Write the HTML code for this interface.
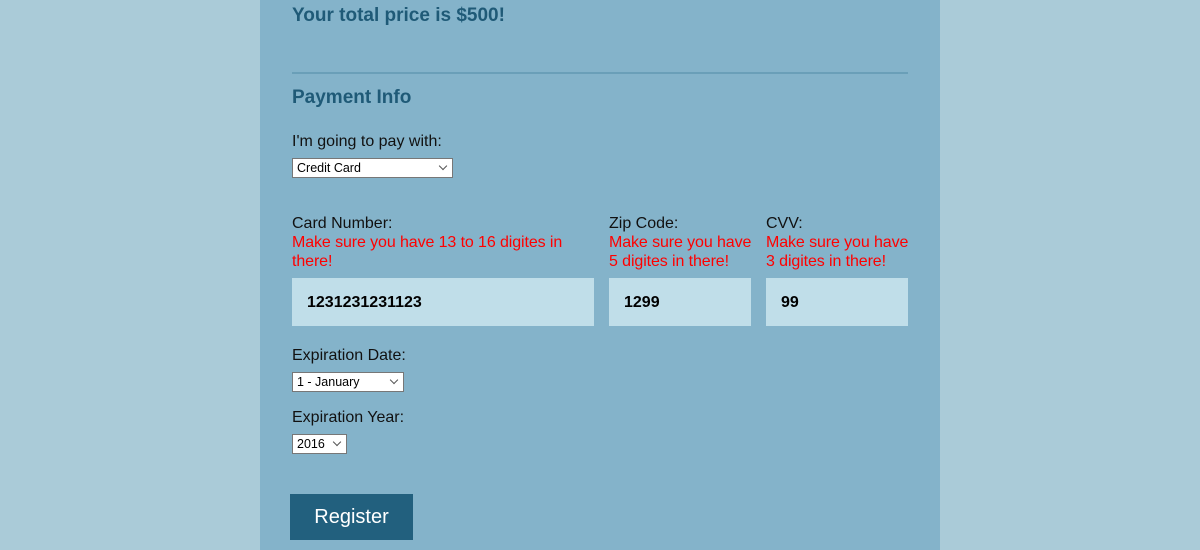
<!DOCTYPE html>
<html><head><style>
body{margin:0;width:1200px;height:550px;background:#aacbd8;font-family:"Liberation Sans",sans-serif;overflow:hidden;position:relative}
.p{position:absolute;left:260px;top:0;width:680px;height:550px;background:#84b3ca}
.a{position:absolute;white-space:nowrap}
.h{color:#1f5a77;font-weight:bold;font-size:19px}
.l{font-size:16px;color:#111}
.r{font-size:16px;color:#f00;line-height:19px;letter-spacing:-0.1px}
.in{position:absolute;background:#c0dee9;height:48px;top:278px;font-weight:bold;font-size:16px;line-height:49px;padding-left:15px;box-sizing:border-box}
.s{position:absolute;background:#fff;border:1px solid #777;height:20px;box-sizing:border-box;font-size:12.5px;line-height:19px;padding-left:4px}
.s:after{content:"";position:absolute;right:6px;top:4px;width:5px;height:5px;border-right:1px solid #555;border-bottom:1px solid #555;transform:rotate(45deg)}
</style></head><body>
<div class="p"></div>
<div class="a h" style="left:292px;top:5px">Your total price is $500!</div>
<div class="a" style="left:292px;top:72px;width:616px;height:2px;background:#6a9fb8"></div>
<div class="a h" style="left:292px;top:87px">Payment Info</div>
<div class="a l" style="left:292px;top:133px">I'm going to pay with:</div>
<div class="s" style="left:292px;top:158px;width:161px">Credit Card</div>
<div class="a l" style="left:292px;top:215px">Card Number:</div>
<div class="a r" style="left:292px;top:233px">Make sure you have 13 to 16 digites in<br>there!</div>
<div class="a l" style="left:609px;top:215px">Zip Code:</div>
<div class="a r" style="left:609px;top:233px">Make sure you have<br>5 digites in there!</div>
<div class="a l" style="left:766px;top:215px">CVV:</div>
<div class="a r" style="left:766px;top:233px">Make sure you have<br>3 digites in there!</div>
<div class="in" style="left:292px;width:302px">1231231231123</div>
<div class="in" style="left:609px;width:142px">1299</div>
<div class="in" style="left:766px;width:142px">99</div>
<div class="a l" style="left:292px;top:347px">Expiration Date:</div>
<div class="s" style="left:292px;top:372px;width:112px">1 - January</div>
<div class="a l" style="left:292px;top:409px">Expiration Year:</div>
<div class="s" style="left:292px;top:434px;width:55px">2016</div>
<div class="a" style="left:290px;top:494px;width:123px;height:46px;background:#22607e;color:#fff;font-size:20px;line-height:47px;text-align:center">Register</div>
</body></html>
